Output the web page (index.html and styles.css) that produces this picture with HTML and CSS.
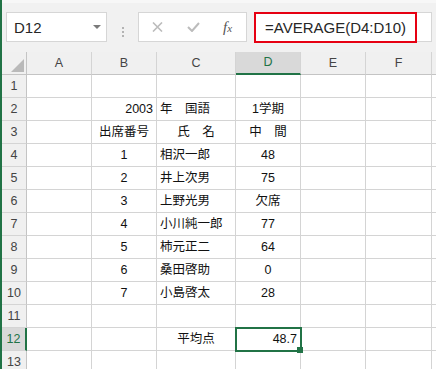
FILE: index.html
```html
<!DOCTYPE html>
<html lang="ja">
<head>
<meta charset="UTF-8">
<meta name="viewport" content="width=device-width, initial-scale=1.0">
<title>AVERAGE関数</title>
<link rel="stylesheet" href="styles.css">
</head>
<body>

<div class="window">
  <!-- 数式バー -->
  <div class="formula-bar">
    <div class="name-box">
      <span>D12</span>
      <span class="arrow"></span>
    </div>
    <div class="sep"><i></i><i></i><i></i></div>
    <div class="fx-box">
      <svg class="icon-cancel" width="11" height="10" viewBox="0 0 11 10">
        <path d="M1 0.5 L10 9.5 M10 0.5 L1 9.5" stroke="#bcbcbc" stroke-width="1.6" fill="none"/>
      </svg>
      <svg class="icon-enter" width="13" height="10" viewBox="0 0 13 10">
        <path d="M1 5 L5 9 L12 1" stroke="#bcbcbc" stroke-width="2" fill="none"/>
      </svg>
      <span class="fx">f<small>x</small></span>
    </div>
    <div class="formula-box">
      <div class="formula-range">=AVERAGE(D4:D10)</div>
    </div>
  </div>

  <!-- シート -->
  <div class="sheet">
    <div class="row head">
      <div class="corner"><span class="tri"></span></div>
      <div>A</div><div>B</div><div>C</div><div class="active">D</div><div>E</div><div>F</div><div></div>
    </div>
    <div class="row">
      <div class="rh">1</div><div></div><div></div><div></div><div></div><div></div><div></div><div></div>
    </div>
    <div class="row">
      <div class="rh">2</div><div></div><div class="r">2003</div><div>年　国語</div><div class="c">1学期</div><div></div><div></div><div></div>
    </div>
    <div class="row">
      <div class="rh">3</div><div></div><div class="c">出席番号</div><div class="c">氏　名</div><div class="c">中　間</div><div></div><div></div><div></div>
    </div>
    <div class="row">
      <div class="rh">4</div><div></div><div class="c">1</div><div>相沢一郎</div><div class="c">48</div><div></div><div></div><div></div>
    </div>
    <div class="row">
      <div class="rh">5</div><div></div><div class="c">2</div><div>井上次男</div><div class="c">75</div><div></div><div></div><div></div>
    </div>
    <div class="row">
      <div class="rh">6</div><div></div><div class="c">3</div><div>上野光男</div><div class="c">欠席</div><div></div><div></div><div></div>
    </div>
    <div class="row">
      <div class="rh">7</div><div></div><div class="c">4</div><div>小川純一郎</div><div class="c">77</div><div></div><div></div><div></div>
    </div>
    <div class="row">
      <div class="rh">8</div><div></div><div class="c">5</div><div>柿元正二</div><div class="c">64</div><div></div><div></div><div></div>
    </div>
    <div class="row">
      <div class="rh">9</div><div></div><div class="c">6</div><div>桑田啓助</div><div class="c">0</div><div></div><div></div><div></div>
    </div>
    <div class="row">
      <div class="rh">10</div><div></div><div class="c">7</div><div>小島啓太</div><div class="c">28</div><div></div><div></div><div></div>
    </div>
    <div class="row">
      <div class="rh">11</div><div></div><div></div><div></div><div></div><div></div><div></div><div></div>
    </div>
    <div class="row">
      <div class="rh active">12</div><div></div><div></div><div class="c">平均点</div><div class="r sel">48.7</div><div></div><div></div><div></div>
    </div>
    <div class="row">
      <div class="rh">13</div><div></div><div></div><div></div><div></div><div></div><div></div><div></div>
    </div>
  </div>
</div>

</body>
</html>
```

FILE: styles.css
```css
body {
    margin: 0;
    font-family: "Liberation Sans", "Noto Sans CJK JP", sans-serif;
    background-color: #f1f1f1;
    overflow: hidden;
}

.window {
    border-left: 2px solid #217346;
    height: 369px;
    box-sizing: border-box;
    overflow: hidden;
}

/* 数式バー */
.formula-bar {
    height: 52px;
    box-sizing: border-box;
    padding: 12px 4px 0 4px;
    display: flex;
    background: linear-gradient(#f7f7f7 0, #f7f7f7 3px, #f1f1f1 3px);
}

.name-box {
    width: 101px;
    height: 30px;
    box-sizing: border-box;
    background-color: #fff;
    border: 1px solid #d6d6d6;
    display: flex;
    align-items: center;
    justify-content: space-between;
    padding: 0 5px 0 7px;
    font-size: 15px;
    color: #262626;
}

.arrow {
    width: 0;
    height: 0;
    border-left: 4px solid transparent;
    border-right: 4px solid transparent;
    border-top: 4px solid #7a7a7a;
}

.sep {
    width: 31px;
    display: flex;
    flex-direction: column;
    align-items: center;
    justify-content: center;
    gap: 2px;
}

.sep i {
    width: 2px;
    height: 2px;
    background-color: #b3b3b3;
}

.fx-box {
    width: 109px;
    height: 30px;
    box-sizing: border-box;
    background-color: #fff;
    border: 1px solid #d6d6d6;
    display: flex;
    align-items: center;
}

.icon-cancel {
    margin-left: 13px;
}

.icon-enter {
    margin-left: 24px;
}

.fx {
    margin-left: 23px;
    font-family: "Liberation Serif", serif;
    font-style: italic;
    font-size: 15px;
    color: #555;
}

.fx small {
    font-size: 11px;
}

.formula-box {
    flex: 1;
    margin-left: 7px;
    height: 30px;
    box-sizing: border-box;
    background-color: #fff;
    border: 1px solid #d6d6d6;
    border-left: none;
}

.formula-range {
    width: 163px;
    height: 31px;
    margin-top: -1px;
    box-sizing: border-box;
    border: 2px solid #e60012;
    padding-left: 9px;
    font-size: 15px;
    line-height: 27px;
    color: #262626;
}

/* シート */
.sheet {
    background-color: #fff;
}

.row {
    display: grid;
    grid-template-columns: 25px 65px 65px 79px 65px 65px 66px 1fr;
    height: 23px;
}

.row > div {
    box-sizing: border-box;
    border-right: 1px solid #d4d4d4;
    border-bottom: 1px solid #d4d4d4;
    padding: 0 3px;
    font-size: 12.5px;
    line-height: 22px;
    color: #111;
    white-space: nowrap;
    overflow: hidden;
}

.row > div:last-child {
    border-right: none;
}

.c {
    text-align: center;
}

.r {
    text-align: right;
}

.head > div {
    background-color: #f0f0f0;
    border-bottom-color: #c4c4c4;
    text-align: center;
    color: #444;
}

.head .active {
    background-color: #d9d9d9;
    border-bottom: 2px solid #217346;
    line-height: 21px;
    color: #217346;
}

.row > .corner {
    display: flex;
    justify-content: flex-end;
    align-items: flex-end;
    padding: 0 2px 2px 0;
    border-right-color: #c4c4c4;
}

.tri {
    width: 13px;
    height: 13px;
    background-color: #b9b9b9;
    clip-path: polygon(100% 0, 100% 100%, 0 100%);
}

.row > .rh {
    background-color: #f0f0f0;
    border-right-color: #c4c4c4;
    padding: 0;
    text-align: center;
    color: #444;
}

.row > .rh.active {
    background-color: #d9d9d9;
    border-right: 2px solid #217346;
    color: #217346;
}

/* 選択セル */
.row > .sel {
    position: relative;
    z-index: 1;
    overflow: visible;
    outline: 2px solid #217346;
    outline-offset: -1px;
}

.sel::after {
    content: "";
    position: absolute;
    right: -3px;
    bottom: -3px;
    width: 6px;
    height: 6px;
    background-color: #217346;
}
```
